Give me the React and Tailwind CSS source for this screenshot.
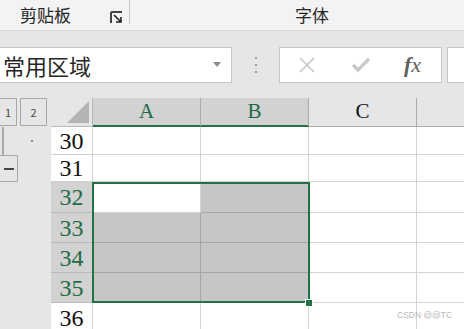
import React from 'react';

const rows = [
  { n: 30, h: 28, sel: false },
  { n: 31, h: 27, sel: false },
  { n: 32, h: 31, sel: true, first: true },
  { n: 33, h: 30, sel: true },
  { n: 34, h: 30, sel: true },
  { n: 35, h: 30, sel: true },
  { n: 36, h: 30, sel: false },
];

const cols = [
  { k: 'A', sel: true },
  { k: 'B', sel: true },
  { k: 'C', sel: false },
  { k: '', sel: false },
];

const serif = { fontFamily: '"Liberation Serif", "Times New Roman", serif' };

function Ribbon() {
  return (
    <div className="h-[31px] bg-[#f3f3f3] border-b border-[#d5d5d5] flex items-stretch">
      <div className="w-[130px] flex items-center border-r border-[#c8c8c8] mb-[6px]">
        <span className="ml-[20px] text-[17px] text-[#262626] leading-none mt-[5px]">剪贴板</span>
        <svg className="ml-[39px] mt-[10px]" width="13" height="13" viewBox="0 0 13 13">
          <path d="M1 1h11M1 1v11" stroke="#444" strokeWidth="2" fill="none" />
          <path d="M4 4l7 7M11 6v5H6" stroke="#222" strokeWidth="1.6" fill="none" />
        </svg>
      </div>
      <div className="flex-1 flex items-center justify-center">
        <span className="text-[17px] text-[#262626] leading-none ml-[30px] -mt-[2px]">字体</span>
      </div>
    </div>
  );
}

function FormulaBar() {
  return (
    <div className="h-[67px] bg-[#e6e6e6] flex items-center">
      <div className="w-[232px] h-[36px] bg-white border border-l-0 border-[#c6c6c6] flex items-center justify-between shrink-0">
        <span className="text-[22px] leading-none text-[#262626] ml-[3px]">常用区域</span>
        <svg className="mr-[10px]" width="8" height="5" viewBox="0 0 8 5">
          <path d="M0 0h8L4 5z" fill="#8a8a8a" />
        </svg>
      </div>
      <div className="w-[47px] flex flex-col items-center gap-[5px] shrink-0">
        <div className="w-[2px] h-[2px] bg-[#9a9a9a]" />
        <div className="w-[2px] h-[2px] bg-[#9a9a9a]" />
        <div className="w-[2px] h-[2px] bg-[#9a9a9a]" />
      </div>
      <div className="w-[163px] h-[36px] bg-white border border-[#c6c6c6] flex items-center shrink-0">
        <svg className="ml-[18px]" width="18" height="18" viewBox="0 0 18 18">
          <path d="M2 2l14 14M16 2L2 16" stroke="#c6c6c6" strokeWidth="1.6" />
        </svg>
        <svg className="ml-[35px]" width="20" height="16" viewBox="0 0 20 16">
          <path d="M2 8l5 5L18 2" stroke="#c8c8c8" strokeWidth="3.2" fill="none" />
        </svg>
        <span className="ml-[33px] text-[22px] italic text-[#606060] leading-none" style={serif}>
          <b className="font-bold">f</b>x
        </span>
      </div>
      <div className="ml-[5px] flex-1 h-[36px] bg-white border border-r-0 border-[#c6c6c6]" />
    </div>
  );
}

function Outline() {
  return (
    <div className="w-[51px] shrink-0 bg-[#e6e6e6] flex flex-col">
      <div className="h-[29px] flex items-start gap-[3px]">
        <div className="w-[17px] h-[28px] border border-l-0 border-[#a8a8a8] flex items-center justify-center text-[11px] text-[#444]">1</div>
        <div className="w-[27px] h-[28px] border border-[#a8a8a8] flex items-center justify-center text-[11px] text-[#444]">2</div>
      </div>
      <div className="h-[28px] relative">
        <div className="absolute left-[2px] top-0 w-[2px] h-full bg-[#a8a8a8]" />
        <div className="absolute left-[31px] top-[13px] w-[2px] h-[2px] bg-[#888]" />
      </div>
      <div className="w-[18px] h-[27px] border border-l-0 border-[#a8a8a8] flex items-center justify-center">
        <div className="w-[10px] h-[2px] bg-[#444]" />
      </div>
    </div>
  );
}

function Sheet() {
  return (
    <div className="relative flex-1 min-w-0">
      {/* header row */}
      <div className="flex h-[29px]">
        <div className="w-[42px] shrink-0 bg-[#e6e6e6] border-r border-b border-[#b8b8b8] relative">
          <svg className="absolute right-[3px] bottom-[3px]" width="22" height="22" viewBox="0 0 22 22">
            <path d="M22 0V22H0z" fill="#b4b4b4" />
          </svg>
        </div>
        {cols.map((c, i) => (
          <div
            key={i}
            className={
              c.sel
                ? 'w-[108px] bg-[#d2d2d2] border-r border-[#ababab] border-b-2 border-b-[#217346] flex items-center justify-center text-[21px] text-[#1e6b45] shrink-0'
                : 'w-[108px] bg-[#e6e6e6] border-r border-[#ababab] border-b border-b-[#ababab] flex items-center justify-center text-[21px] text-[#111] shrink-0'
            }
            style={serif}
          >
            {c.k}
          </div>
        ))}
      </div>
      {rows.map((r) => (
        <div key={r.n} className="flex" style={{ height: r.h }}>
          <div
            className={
              r.sel
                ? 'w-[42px] bg-[#d2d2d2] border-r border-b border-[#b8b8b8] flex items-center justify-center text-[24px] text-[#1e6b45] shrink-0'
                : 'w-[42px] bg-white border-r border-b border-[#d0d0d0] flex items-center justify-center text-[24px] text-[#111] shrink-0'
            }
            style={serif}
          >
            {r.n}
          </div>
          {cols.map((c, i) => {
            const inSel = r.sel && c.sel;
            const white = inSel && r.first && c.k === 'A';
            return (
              <div
                key={i}
                className={
                  inSel && !white
                    ? 'w-[108px] bg-[#c6c6c6] border-r border-b border-[#a6a6a6] shrink-0'
                    : 'w-[108px] bg-white border-r border-b border-[#d4d4d4] shrink-0'
                }
              />
            );
          })}
        </div>
      ))}
      {/* selection outline */}
      <div className="absolute left-[41px] top-[84px] w-[218px] h-[121px] border-2 border-[#217346] pointer-events-none" />
      <div className="absolute left-[254px] top-[201px] w-[8px] h-[8px] bg-[#217346] border border-white" />
      <span className="absolute left-[346px] top-[213px] whitespace-nowrap text-[8.5px] leading-none text-[#b8b8b8]" style={{ fontFamily: 'Arial, "Liberation Sans", sans-serif' }}>
        CSDN @@TC
      </span>
    </div>
  );
}

export default function App() {
  return (
    <div
      className="w-[464px] h-[329px] overflow-hidden bg-white"
      style={{ fontFamily: '"Noto Sans CJK SC", "Noto Sans", sans-serif' }}
    >
      <Ribbon />
      <FormulaBar />
      <div className="flex h-[231px]">
        <Outline />
        <Sheet />
      </div>
    </div>
  );
}
